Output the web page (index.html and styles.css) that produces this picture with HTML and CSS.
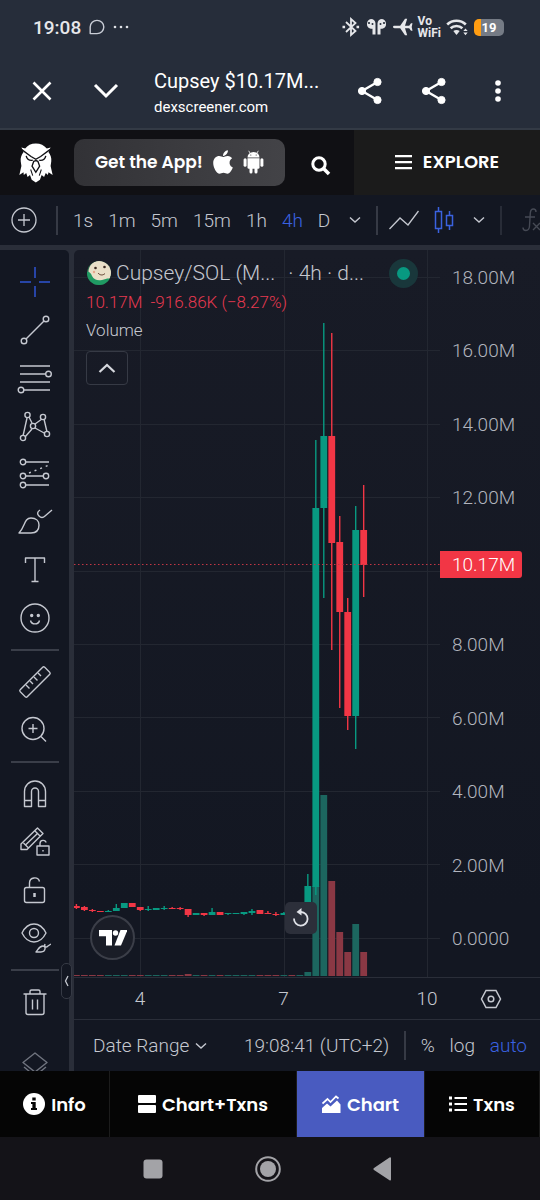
FILE: index.html
```html
<!DOCTYPE html>
<html lang="en">
<head>
  <meta charset="UTF-8">
  <title>Cupsey $10.17M</title>
  <meta name="viewport" content="width=device-width, initial-scale=1.0">
  <link rel="stylesheet" href="styles.css">
</head>
<body>

  <div class="status-bar">
    <span class="clock">19:08</span>
    <svg width="16" height="16" viewBox="0 0 16 16" fill="none" stroke="#c9cdd6" stroke-width="1.4" stroke-linejoin="round"><path d="M1.2 14.6V8A6.8 6.6 0 1 1 8 14.6Z"/></svg>
    <svg class="more-dots" width="16" height="4" viewBox="0 0 16 4" fill="#dfe1e6"><circle cx="2" cy="2" r="1.3"/><circle cx="8" cy="2" r="1.3"/><circle cx="14" cy="2" r="1.3"/></svg>
    <div class="status-icons">
      <svg width="18" height="20" viewBox="0 0 18 20" fill="none" stroke="#e6e7ea" stroke-width="1.8"><path d="M4 5l9.500 9L9 18V2l4.500 4L4 15"/><path d="M.5 10h2.600M14.500 10h2.600" stroke-width="2.400"/></svg>
      <svg width="23" height="18" viewBox="0 0 23 18" fill="#e6e7ea"><path d="M6 1a5 5 0 0 0-1 9.500c1 .3 2 .3 2.500.2V16.500h3V5.500A4.500 4.500 0 0 0 6 1Z"/><path d="M17 1a5 5 0 0 1 1 9.500c-1 .3-2 .3-2.500.2V16.500h-3V5.500A4.500 4.500 0 0 1 17 1Z"/><g fill="#262d3a"><circle cx="4" cy="5" r="1.100"/><circle cx="7.500" cy="6" r="1"/><circle cx="19" cy="5" r="1.100"/><circle cx="15.500" cy="6" r="1"/></g></svg>
      <svg width="20" height="18" viewBox="0 0 20 18" fill="#e6e7ea"><path d="M0 9c0-.8.6-1.200 1.600-1.200h5.600L12 .8h2.200L12 7.800h4.200L18 5.300h1.500L18.700 9l.8 3.700H18l-1.800-2.500H12l2.200 7H12L7.200 10.200H1.600C.6 10.200 0 9.800 0 9Z"/></svg>
      <span class="vowifi">Vo<br>WiFi</span>
      <svg width="23" height="18" viewBox="0 0 23 18" fill="none" stroke="#e6e7ea" stroke-width="2.600"><path d="M1.200 6.500a13.500 13.500 0 0 1 18.600 0M4.600 10.300a8.600 8.600 0 0 1 11.800 0"/><path d="M10.500 17l-3.200-4c2-1.500 4.400-1.500 6.400 0Z" fill="#e6e7ea" stroke="none"/><path d="M17.300 13l2.200-2.600 2.200 2.600zM17.300 14.600l2.200 2.600 2.200-2.600z" fill="#e6e7ea" stroke="none"/></svg>
      <span class="battery">19</span>
    </div>
  </div>

  <div class="browser-bar">
    <button class="icon-btn" aria-label="Close"><svg width="20" height="20" viewBox="0 0 20 20" fill="none" stroke="#fff" stroke-width="2.600"><path d="M1.500 1.500l17 17M18.500 1.500l-17 17"/></svg></button>
    <button class="icon-btn" aria-label="Minimise"><svg width="26" height="16" viewBox="0 0 26 16" fill="none" stroke="#fff" stroke-width="3"><path d="M2 2l11 11L24 2"/></svg></button>
    <div class="page-info">
      <div class="page-title">Cupsey $10.17M...</div>
      <div class="page-host">dexscreener.com</div>
    </div>
    <button class="icon-btn" aria-label="Share"><svg width="26" height="28" viewBox="0 0 26 28" fill="#fff" stroke="#fff"><path d="M20.500 5L5 14l15.500 9" fill="none" stroke-width="2.400"/><circle cx="20.500" cy="5" r="3.600"/><circle cx="5" cy="14" r="3.600"/><circle cx="20.500" cy="23" r="3.600"/></svg></button>
    <button class="icon-btn" aria-label="Share page"><svg width="26" height="28" viewBox="0 0 26 28" fill="#fff" stroke="#fff"><path d="M20.500 5L5 14l15.500 9" fill="none" stroke-width="2.400"/><circle cx="20.500" cy="5" r="3.600"/><circle cx="5" cy="14" r="3.600"/><circle cx="20.500" cy="23" r="3.600"/></svg></button>
    <button class="icon-btn" aria-label="More"><svg width="8" height="24" viewBox="0 0 8 24" fill="#fff"><circle cx="4" cy="4" r="2.800"/><circle cx="4" cy="12" r="2.800"/><circle cx="4" cy="20" r="2.800"/></svg></button>
  </div>

  <header class="site-header">
    <a class="logo" href="#" aria-label="Home">
      <svg width="34" height="40" viewBox="-1 -1 99 116"><path fill="#fff" d="M48 0C34 0 24 5 17 15L6 12L12 26C6 34 3 42 4 52L6 66L0 92L12 84L13 92L20 86L24 98L31 92L36 106L48 114L60 106L65 92L72 98L77 86L83 92L85 84L97 92L91 66L93 52C94 42 91 34 85 26L91 12L80 15C72 5 62 0 48 0Z"/><g fill="none" stroke="#101014" stroke-width="4"><path d="M4 16L34 38L48 46L62 38L92 16"/><path d="M20 36C22 46 30 50 39 49M77 36C75 46 67 50 58 49"/><path d="M48 50L42 52L37 66L48 84L59 66L54 52Z"/><path d="M33 76L39 94M64 76L58 94" stroke-width="3"/></g></svg>
    </a>
    <button class="app-btn">
      Get the App!
      <svg width="20" height="24" viewBox="0 30 384 452" fill="#fff"><path d="M318.700 268.700c-.2-36.700 16.400-64.400 50-84.800-18.800-26.900-47.200-41.700-84.700-44.600-35.500-2.800-74.300 20.700-88.500 20.700-15 0-49.400-19.700-76.400-19.700C63.300 141.200 4 184.800 4 273.500q0 39.300 14.400 81.200c12.800 36.700 59 126.700 107.200 125.200 25.200-.6 43-17.900 75.800-17.900 31.800 0 48.300 17.900 76.400 17.900 48.600-.7 90.400-82.500 102.600-119.300-65.200-30.700-61.700-90-61.700-91.900zm-56.600-164.200c27.300-32.400 24.800-61.900 24-72.500-24.100 1.400-52 16.400-67.900 34.900-17.500 19.800-27.800 44.300-25.600 71.900 26.100 2 49.900-11.400 69.500-34.300z"/></svg>
      <svg width="21" height="24" viewBox="0 0 21 24" fill="#fff"><path d="M4.500 7.500a6 5.500 0 0 1 12 0Z"/><path d="M7 3L5.700.8M14 3L15.300.8" stroke="#fff" stroke-width=".8"/><path d="M4.500 8.300h12v9.200a1.300 1.300 0 0 1-1.300 1.300H5.800a1.300 1.300 0 0 1-1.300-1.300Z"/><rect x=".6" y="8.300" width="3" height="8.400" rx="1.500"/><rect x="17.400" y="8.300" width="3" height="8.400" rx="1.500"/><rect x="6.500" y="16" width="3" height="7.500" rx="1.500"/><rect x="11.500" y="16" width="3" height="7.500" rx="1.500"/><circle cx="7.800" cy="5" r=".6" fill="#3c3c3f"/><circle cx="13.200" cy="5" r=".6" fill="#3c3c3f"/></svg>
    </button>
    <button class="search-btn" aria-label="Search"><svg width="20" height="20" viewBox="0 0 20 20" fill="none" stroke="#fff"><circle cx="8" cy="8" r="6.200" stroke-width="3"/><path d="M12.500 12.500l5.500 5.500" stroke-width="3.600"/></svg></button>
    <button class="explore-btn">
      <svg width="17" height="16" viewBox="0 0 17 16" fill="#fff"><path d="M0 1h17v2.200H0zM0 7h17v2.200H0zM0 13h17v2.200H0z"/></svg>
      EXPLORE
    </button>
  </header>

  <div class="chart-toolbar">
    <button aria-label="Compare"><svg width="26" height="26" viewBox="0 0 26 26" fill="none" stroke="#c5c8d0" stroke-width="1.300"><circle cx="13" cy="13" r="12"/><path d="M13 7v12M7 13h12"/></svg></button>
    <span class="v-sep first"></span>
    <button>1s</button>
    <button>1m</button>
    <button>5m</button>
    <button>15m</button>
    <button>1h</button>
    <button class="selected">4h</button>
    <button>D</button>
    <button class="menu-btn" aria-label="Intervals"><svg width="12" height="8" viewBox="0 0 12 8" fill="none" stroke="#c5c8d0" stroke-width="1.400"><path d="M1 1.500l5 4.500 5-4.500"/></svg></button>
    <span class="v-sep"></span>
    <button class="line-btn" aria-label="Line"><svg width="30" height="20" viewBox="0 0 30 20" fill="none" stroke="#c5c8d0" stroke-width="1.300"><path d="M.5 19L11 8l8 7L29.500 1"/></svg></button>
    <button aria-label="Candles"><svg width="20" height="28" viewBox="0 0 20 28" fill="none" stroke="#3a62e0" stroke-width="1.500"><path d="M1.500 5.500h6v17h-6zM4.500 1v4.500M4.500 22.500V27M12.500 9.500h6v10h-6zM15.500 5v4.500M15.500 19.500V24"/></svg></button>
    <button class="menu-btn" aria-label="Chart type"><svg width="12" height="8" viewBox="0 0 12 8" fill="none" stroke="#c5c8d0" stroke-width="1.400"><path d="M1 1.500l5 4.500 5-4.500"/></svg></button>
    <span class="v-sep faint"></span>
    <button class="menu-btn" aria-label="Indicators"><svg width="20" height="26" viewBox="0 0 20 26" fill="none" stroke="#464a55" stroke-width="1.400"><path d="M15 5c0-2-1-3-2.600-3C10.500 2 9.500 3.500 9.300 6L8.500 19c-.2 3-1.500 4.500-3.600 4.500C3 23.500 2 22 2 20.500M4 10h10M12 16l7 7M19 16l-7 7"/></svg></button>
  </div>

  <main class="workspace">
    <nav class="tools">
      <button aria-label="Crosshair"><svg width="32" height="32" viewBox="0 0 32 32" fill="none" stroke="#2f55d4" stroke-width="1.500"><path d="M16 1v11M16 20v11M1 16h11M20 16h11"/></svg></button>
      <button aria-label="Trend line"><svg class="line-icon" width="32" height="32" viewBox="0 0 32 32"><path d="M7 25L25 7"/><circle cx="5" cy="27" r="2.800"/><circle cx="27" cy="5" r="2.800"/></svg></button>
      <button aria-label="Fib retracement"><svg class="line-icon" width="36" height="32" viewBox="0 0 36 32"><path d="M3 4h30M3 12h26M3 20h30M6 28h27"/><circle cx="31.500" cy="12" r="2.800"/><circle cx="4" cy="28" r="2.800"/></svg></button>
      <button aria-label="Patterns"><svg class="line-icon" width="32" height="32" viewBox="0 0 32 32"><path d="M8 8L4 26M10 7l3 6M6 27l7-8M16 14l7-5M25 9l3 13M16 18l11 6"/><circle cx="8.500" cy="5" r="2.600"/><circle cx="24" cy="7" r="2.600"/><circle cx="14" cy="16" r="2.600"/><circle cx="4" cy="28" r="2.600"/><circle cx="28" cy="24" r="2.600"/></svg></button>
      <button aria-label="Prediction"><svg class="line-icon" width="32" height="32" viewBox="0 0 32 32"><path d="M7 4h23M7 18h17M7 27h23"/><path d="M10 15L30 7" stroke-dasharray="2 4"/><circle cx="4" cy="4" r="2.700"/><circle cx="4" cy="18" r="2.700"/><circle cx="27" cy="18" r="2.700"/><circle cx="4" cy="27" r="2.700"/></svg></button>
      <button aria-label="Brush"><svg class="line-icon" width="36" height="32" viewBox="0 0 36 32"><path d="M2 27C8 21 7 12 14 12C19 12 22 15 22 19C22 24 19 27 14 27Z"/><path d="M23 4c-3 2-3 4-1 6s4 2 6 0l7-6"/></svg></button>
      <button aria-label="Text"><svg class="line-icon" width="24" height="28" viewBox="0 0 24 28"><path d="M2.500 7V2h19v5M12 2v23M8.500 25.500h7"/></svg></button>
      <button aria-label="Emoji"><svg class="line-icon" width="32" height="32" viewBox="0 0 32 32"><circle cx="16" cy="16" r="14"/><path d="M11.500 18.500c1 4.500 8 4.500 9 0"/><circle cx="12.700" cy="13.500" r="1" class="dot"/><circle cx="19.300" cy="13.500" r="1" class="dot"/></svg></button>
      <span class="h-sep"></span>
      <button aria-label="Measure"><svg class="line-icon" width="34" height="34" viewBox="0 0 34 34"><rect x="-2" y="12" width="38" height="10" rx="1.500" transform="rotate(-45 17 17) translate(1.500 0) scale(.91 1)"/><path d="M8 20l3.500 3.500M12 16l3 3M16 12l3.500 3.500M20 8l3 3"/></svg></button>
      <button aria-label="Zoom in"><svg class="line-icon" width="32" height="32" viewBox="0 0 32 32"><circle cx="14" cy="14.500" r="11"/><path d="M22 22.500l5 5M14 10v9M9.500 14.500h9"/></svg></button>
      <span class="h-sep"></span>
      <button aria-label="Magnet"><svg class="line-icon" width="28" height="30" viewBox="0 0 28 30"><path d="M3.500 27.500V12.500a10.500 10.500 0 0 1 21 0v15H17.500V12.500a3.500 3.500 0 0 0-7 0v15ZM3.500 21.500h7M17.500 21.500h7"/></svg></button>
      <button aria-label="Keep drawing"><svg class="line-icon" width="32" height="32" viewBox="0 0 32 32"><path d="M2 18L18.500 2l5.500 5.500L8 23.500H2ZM16 5l5.500 5.500M4.500 17l4.500 4.500M7 18.500L19 7"/><path d="M18 20h12v9H18ZM21 20v-2.500c0-4 5.500-4 6-1M24 24v1.500"/></svg></button>
      <button aria-label="Lock"><svg class="line-icon" width="28" height="30" viewBox="0 0 28 30"><rect x="3.500" y="12.500" width="20" height="15" rx="2"/><path d="M8.500 12.500V8c0-6 8.500-7 10-1.500"/><path d="M13.500 18v4" stroke-width="2.500"/></svg></button>
      <button aria-label="Hide"><svg class="line-icon" width="32" height="34" viewBox="0 0 32 34"><path d="M3 12c6-12 18-12 24 0c-6 12-18 12-24 0Z"/><circle cx="15" cy="12" r="4.500"/><path d="M17 31c2-2 3-6 7-6c3 0 3 6-2 6ZM26 23c-1 3 1 4 3 2l3-2"/></svg></button>
      <span class="h-sep"></span>
      <button aria-label="Delete"><svg class="line-icon" width="28" height="30" viewBox="0 0 28 30"><path d="M2.500 7h23M5 7v18.500a2 2 0 0 0 2 2h14a2 2 0 0 0 2-2V7M9 7V4.500a1.500 1.500 0 0 1 1.500-1.500h7A1.500 1.500 0 0 1 19 4.500V7M11.500 12.500v10M16.500 12.500v10"/></svg></button>
      <button class="layers" aria-label="Object tree"><svg class="line-icon dim" width="28" height="30" viewBox="0 0 28 30"><path d="M14 4l12 9.500L14 23 2 13.500ZM3 18l11 9 11-9"/></svg></button>
    </nav>

    <section class="chart">
      <button class="collapse" aria-label="Hide toolbar"><svg width="5" height="12" viewBox="0 0 5 12" fill="none" stroke="#c5c8d0" stroke-width="1.300"><path d="M4 1L1.500 6 4 11"/></svg></button>

      <div class="chart-body">
        <div class="plot">
          <svg id="plot" class="plot-svg" viewBox="0 0 366 727" preserveAspectRatio="none"></svg>

          <div class="legend">
            <div class="legend-title">
              <svg width="26" height="26" viewBox="0 0 26 26"><defs><clipPath id="egg"><circle cx="13" cy="13" r="12"/></clipPath></defs><g clip-path="url(#egg)"><rect width="26" height="26" fill="#2b6a4c"/><ellipse cx="14" cy="12" rx="11.500" ry="11.500" fill="#e9dfc8"/><path d="M0 12c3-1 5 1 6 4c2 4 6 5 10 4s6-2 10-1v8H0Z" fill="#1f9a63"/></g><circle cx="9.500" cy="8" r="1.300" fill="#3a2a22"/><circle cx="18.500" cy="7" r="1.300" fill="#3a2a22"/><path d="M12 13c2 2.500 5 2.500 7 .5" fill="none" stroke="#5a3a2a"/><circle cx="8" cy="12" r="1.200" fill="#e6a58c"/></svg>
              <span class="symbol">Cupsey/SOL (M...</span>
              <span class="interval">· 4h · d...</span>
              <span class="live-dot"></span>
            </div>
            <div class="legend-price"><span>10.17M</span><span>-916.86K (−8.27%)</span></div>
            <div class="legend-volume">Volume</div>
            <button class="fold-btn" aria-label="Collapse legend"><svg width="18" height="12" viewBox="0 0 18 12" fill="none" stroke="#d6d8de" stroke-width="2.200"><path d="M1.500 10L9 3l7.500 7"/></svg></button>
          </div>

          <a class="tv-logo" href="#" aria-label="TradingView"><svg width="28" height="16" viewBox="0 0 28 16" fill="#fff"><path d="M0 0h13v15.500H7V6.200H0Z"/><circle cx="16.500" cy="3" r="2.700"/><path d="M21.500 0H28.500L22 15.500H15.500Z"/></svg></a>
          <button class="reset-btn" aria-label="Reset chart"><svg width="18" height="20" viewBox="0 0 18 20" fill="none" stroke="#e0e2e8" stroke-width="1.800"><path d="M2 10.500a6.800 6.800 0 1 0 7-6.500H6"/><path d="M9.500 0v7.500L4.500 4Z" fill="#e0e2e8" stroke="none"/></svg></button>
        </div>

        <div class="price-scale">
          <span>18.00M</span>
          <span>16.00M</span>
          <span>14.00M</span>
          <span>12.00M</span>
          <span></span>
          <span>8.00M</span>
          <span>6.00M</span>
          <span>4.00M</span>
          <span>2.00M</span>
          <span>0.0000</span>
          <div class="last-price">10.17M</div>
        </div>
      </div>

      <div class="time-scale">
        <div class="dates"><span>4</span><span>7</span><span>10</span></div>
        <button aria-label="Scale settings"><svg width="22" height="20" viewBox="0 0 22 20" fill="none" stroke="#c5c8d0" stroke-width="1.500"><path d="M6 1.500h10l4.500 8.500-4.500 8.500H6L1.500 10Z"/><circle cx="11" cy="10" r="2.800"/></svg></button>
      </div>

      <div class="range-bar">
        <button>Date Range <svg width="12" height="8" viewBox="0 0 12 8" fill="none" stroke="#c5c8d0" stroke-width="1.400"><path d="M1 1.500l5 4.500 5-4.500"/></svg></button>
        <button class="utc">19:08:41 (UTC+2)</button>
        <span class="v-sep"></span>
        <button>%</button>
        <button>log</button>
        <button class="selected">auto</button>
      </div>
    </section>
  </main>

  <nav class="tabs">
    <a href="#"><svg width="22" height="22" viewBox="0 0 22 22"><circle cx="11" cy="11" r="11" fill="#fff"/><path d="M9.300 4.500h3.400v3H9.300zM8 9h4.700v6H14v2H8v-2h1.400v-4H8z" fill="#050505"/></svg>Info</a>
    <a href="#"><svg width="18" height="18" viewBox="0 0 18 18" fill="#fff"><rect width="18" height="8" rx="1"/><rect y="10" width="18" height="8" rx="1"/></svg>Chart+Txns</a>
    <a href="#" class="active"><svg width="19" height="18" viewBox="0 0 19 18" fill="#fff"><path d="M0 13l5-4.500 3.500 3L15 5.500l3.500 4V18H0Z"/><path d="M.5 8.500L5.500 4l3 3L14 1.500l2.500 2" fill="none" stroke="#fff" stroke-width="1.700"/></svg>Chart</a>
    <a href="#"><svg width="18" height="16" viewBox="0 0 18 16" fill="#fff"><path d="M0 .5h3v3H0zM0 6.500h3v3H0zM0 12.500h3v3H0zM5.500 1H18v2H5.500zM5.500 7H18v2H5.500zM5.500 13H18v2H5.500z"/></svg>Txns</a>
  </nav>

  <div class="system-nav">
    <button aria-label="Recents"><svg width="26" height="26" viewBox="0 0 26 26" fill="#a3a3a7"><rect x="3.500" y="3.500" width="19" height="19" rx="3"/></svg></button>
    <button aria-label="Home"><svg width="26" height="26" viewBox="0 0 26 26" fill="#a3a3a7"><circle cx="13" cy="13" r="11.800" fill="none" stroke="#a3a3a7" stroke-width="2"/><circle cx="13" cy="13" r="8"/></svg></button>
    <button aria-label="Back"><svg width="26" height="26" viewBox="0 0 26 26" fill="#a3a3a7"><path d="M21 2v21.500a1 1 0 0 1-1.500.8L4 14a1.200 1.200 0 0 1 0-2L19.500 1.500A1 1 0 0 1 21 2Z"/></svg></button>
  </div>

  <script src="script.js"></script>
</body>
</html>
```
FILE: styles.css
```css
* {
  margin: 0;
  padding: 0;
  box-sizing: border-box;
}

body {
  height: 100vh;
  display: flex;
  flex-direction: column;
  overflow: hidden;
  font-family: Roboto, "Liberation Sans", sans-serif;
  font-weight: 300;
  color: #c5c8d0;
  background-color: #131722;
}

button {
  display: flex;
  align-items: center;
  justify-content: center;
  border: none;
  background: none;
  font: inherit;
  color: inherit;
  white-space: nowrap;
  cursor: pointer;
}

a {
  color: inherit;
  text-decoration: none;
}

svg {
  display: block;
  flex-shrink: 0;
}

/* Phone status bar */
.status-bar {
  height: 54px;
  padding: 0 36px 0 33px;
  display: flex;
  align-items: center;
  gap: 8px;
  background-color: #262d3a;
  color: #e6e7ea;
}

.clock {
  font-size: 19px;
  font-weight: 500;
}

.status-icons {
  margin-left: auto;
  display: flex;
  align-items: center;
  gap: 5px;
}

.vowifi {
  font-size: 12px;
  line-height: 12px;
  font-weight: 700;
}

.battery {
  width: 30px;
  height: 17px;
  border-radius: 5px;
  background: linear-gradient(to right, #ff9d12 7px, #757b85 7px);
  color: #fff;
  font-size: 13px;
  line-height: 17px;
  font-weight: 700;
  text-align: center;
}

/* In-app browser bar */
.browser-bar {
  height: 76px;
  padding: 0 24px 0 24px;
  display: flex;
  align-items: center;
  background-color: #262d3a;
  border-bottom: 2px solid #333a45;
  color: #fff;
}

.icon-btn {
  width: 36px;
  height: 48px;
}

.icon-btn + .icon-btn {
  margin-left: 28px;
}

.page-info {
  flex: 1;
  margin-left: 30px;
  padding-top: 4px;
  font-weight: 400;
}

.page-title {
  font-size: 20px;
  line-height: 28px;
}

.page-host {
  font-size: 15px;
  line-height: 24px;
}

/* Site header */
.site-header {
  height: 65px;
  display: flex;
  align-items: center;
  background-color: #101014;
  color: #fff;
  font-family: Poppins, Inter, sans-serif;
  font-weight: 600;
}

.logo {
  margin: 0 21px 0 19px;
}

.app-btn {
  height: 47px;
  flex: 213;
  gap: 10px;
  padding-bottom: 2px;
  border-radius: 10px;
  background: linear-gradient(to right, #323236, #434347);
  font-size: 17px;
}

.search-btn {
  flex: 66;
  height: 47px;
  padding: 6px 0 0 4px;
}

.explore-btn {
  flex: 188;
  height: 100%;
  gap: 11px;
  padding: 0 0 2px;
  background-color: #1b1b1b;
  font-size: 18px;
}

/* Interval toolbar */
.chart-toolbar {
  height: 50px;
  flex-shrink: 0;
  padding-left: 11px;
  display: flex;
  align-items: center;
  gap: 15px;
  overflow: hidden;
  font-size: 19px;
}

.v-sep {
  width: 2px;
  height: 29px;
  flex-shrink: 0;
  background-color: #363a45;
}

.v-sep.first {
  margin-left: 4px;
}

.v-sep.faint {
  background-color: #282c37;
}

.line-btn {
  margin-left: -4px;
}

.menu-btn {
  margin-left: 4px;
}

.selected {
  color: #3a62e0;
}

/* Workspace */
.workspace {
  flex: 1;
  min-height: 0;
  display: flex;
  gap: 5px;
  padding-top: 5px;
  background-color: #2a2e39;
}

.tools {
  width: 69px;
  flex-shrink: 0;
  padding-top: 8px;
  display: flex;
  flex-direction: column;
  align-items: center;
  overflow: hidden;
  border-radius: 0 5px 0 0;
  background-color: #131722;
}

.tools button {
  width: 48px;
  height: 48px;
  flex-shrink: 0;
}

.tools .layers {
  margin-top: 14px;
}

.line-icon {
  fill: none;
  stroke: #c5c8d0;
  stroke-width: 1.4;
  stroke-linejoin: round;
}

.line-icon circle {
  fill: #131722;
}

.line-icon .dot {
  fill: #c5c8d0;
}

.line-icon.dim {
  stroke: #70747f;
}

.h-sep {
  width: 48px;
  height: 2px;
  flex-shrink: 0;
  margin: 7px 0;
  background-color: #3a3e49;
}

.chart {
  position: relative;
  flex: 1;
  min-width: 0;
  display: flex;
  flex-direction: column;
  border-radius: 5px 0 0 0;
  background: linear-gradient(#181b26, #131722 80%);
}

.collapse {
  position: absolute;
  left: -13px;
  bottom: 72px;
  width: 11px;
  height: 36px;
  border: 1px solid #363a45;
  border-radius: 5px;
  background-color: #131722;
}

.chart-body {
  flex: 1;
  min-height: 0;
  display: flex;
}

.plot {
  position: relative;
  flex: 1;
  min-width: 0;
}

.plot-svg {
  width: 100%;
  height: 100%;
}

.legend {
  position: absolute;
  top: 8px;
  left: 12px;
}

.legend-title {
  height: 30px;
  display: flex;
  align-items: center;
  font-size: 21px;
  white-space: nowrap;
}

.symbol {
  margin-left: 4px;
}

.interval {
  margin: 0 25px 0 13px;
}

.live-dot {
  width: 29px;
  height: 29px;
  border: 8px solid #19373b;
  border-radius: 50%;
  background-color: #089981;
}

.legend-price {
  display: flex;
  gap: 8px;
  font-size: 17px;
  line-height: 28px;
  color: #e63950;
}

.legend-volume {
  font-size: 17px;
  line-height: 28px;
}

.fold-btn {
  width: 42px;
  height: 34px;
  margin-top: 7px;
  border: 1px solid #363a45;
  border-radius: 4px;
}

.tv-logo {
  position: absolute;
  left: 16px;
  bottom: 17px;
  width: 45px;
  height: 45px;
  display: flex;
  align-items: center;
  justify-content: center;
  border: 2px solid #3b3e48;
  border-radius: 50%;
  background-color: #1a1d27;
}

.reset-btn {
  position: absolute;
  left: 211px;
  bottom: 43px;
  width: 32px;
  height: 32px;
  border-radius: 5px;
  background-color: #2c2f3a;
}

.price-scale {
  position: relative;
  width: 100px;
  padding: 16px 0 26px 12px;
  display: flex;
  flex-direction: column;
  justify-content: space-between;
  font-size: 19px;
  line-height: 24px;
  color: #b2b5be;
}

.price-scale span {
  height: 24px;
}

.last-price {
  position: absolute;
  top: 301px;
  left: 0;
  width: 82px;
  padding-left: 12px;
  line-height: 27px;
  border-radius: 0 3px 3px 0;
  background-color: #f23645;
  color: #fff;
}

.time-scale {
  height: 42px;
  padding: 0 38px 0 46px;
  display: flex;
  align-items: center;
  gap: 33px;
  border-top: 1px solid #2a2e39;
  font-size: 19px;
}

.dates {
  flex: 1;
  display: flex;
  justify-content: space-between;
}

.dates span {
  width: 40px;
  text-align: center;
}

.range-bar {
  height: 52px;
  padding: 0 13px 0 19px;
  display: flex;
  align-items: center;
  justify-content: space-between;
  border-top: 1px solid #2a2e39;
  font-size: 19px;
}

.range-bar button {
  gap: 6px;
}

.range-bar .utc {
  margin-left: 22px;
}

/* Page tabs */
.tabs {
  height: 66px;
  display: grid;
  grid-template-columns: 110fr 187fr 128fr 115fr;
  background-color: #050505;
  color: #fff;
  font-family: Poppins, Inter, sans-serif;
  font-size: 18px;
  font-weight: 600;
}

.tabs a {
  display: flex;
  align-items: center;
  justify-content: center;
  gap: 6px;
  white-space: nowrap;
  border-right: 1px solid #1c1c1c;
}

.tabs .active {
  background-color: #495bc0;
}

/* Android navigation */
.system-nav {
  height: 63px;
  padding-right: 4px;
  display: flex;
  align-items: center;
  justify-content: center;
  gap: 89px;
  background-color: #141318;
}
```
FILE: script.js
```js
const SVG_NS = "http://www.w3.org/2000/svg";
const plot = document.getElementById("plot");

const UP = "#089981";
const DOWN = "#f23645";
const VOL_UP = "#1c665f";
const VOL_DOWN = "#8a3844";
const STEP = 7.98;
const BOTTOM = 726;

// [direction, high, body top, body bottom, low, volume height]
const candles = [
  ["d", 654, 656, 658, 659, 1],
  ["d", 656, 657, 660, 661, 1],
  ["d", 659, 660, 661, 662, 1],
  ["d", 661, 661, 662, 662, 1],
  ["u", 660, 661, 662, 662, 1],
  ["u", 654, 658, 661, 661, 1],
  ["u", 653, 653, 658, 658, 1],
  ["d", 653, 653, 657, 657, 1],
  ["d", 657, 657, 660, 661, 1],
  ["u", 656, 659, 660, 661, 1],
  ["u", 658, 658, 660, 660, 1],
  ["u", 656, 658, 659, 660, 1],
  ["d", 657, 658, 659, 659, 1],
  ["d", 657, 658, 659, 660, 1],
  ["d", 659, 659, 665, 667, 2],
  ["u", 663, 663, 665, 665, 1],
  ["d", 663, 663, 665, 666, 1],
  ["u", 658, 662, 665, 665, 1],
  ["d", 662, 662, 665, 665, 1],
  ["u", 663, 663, 664, 665, 1],
  ["u", 663, 663, 664, 664, 1],
  ["u", 662, 662, 664, 665, 1],
  ["u", 659, 661, 663, 665, 1],
  ["d", 660, 660, 664, 664, 1],
  ["d", 661, 663, 664, 664, 1],
  ["d", 662, 664, 665, 666, 1],
  ["u", 662, 663, 665, 665, 1],
  ["d", 662, 663, 665, 666, 1],
  ["u", 658, 660, 664, 665, 1],
  ["u", 624, 636, 664, 664, 4],
  ["u", 190, 258, 637, 645, 90],
  ["u", 73, 186, 258, 348, 181],
  ["d", 83, 186, 293, 400, 95],
  ["d", 266, 292, 362, 458, 44],
  ["d", 348, 362, 466, 480, 24],
  ["u", 256, 280, 466, 499, 52],
  ["d", 235, 280, 315, 347, 24]
];

function rect(x, y, width, height, fill) {
  const el = document.createElementNS(SVG_NS, "rect");
  el.setAttribute("x", x);
  el.setAttribute("y", y);
  el.setAttribute("width", width);
  el.setAttribute("height", height);
  el.setAttribute("fill", fill);
  plot.appendChild(el);
}

// Grid
for (let i = 0; i < 10; i++) {
  rect(0, Math.round(27 + i * 73.4), 366, 1, "#232731");
}
[66, 210, 353].forEach(x => rect(x, 0, 1, 727, "#232731"));

// Volume
candles.forEach((c, i) => {
  rect(i * STEP - 1, BOTTOM - c[5], 6.8, c[5], c[0] === "u" ? VOL_UP : VOL_DOWN);
});

// Candles
candles.forEach((c, i) => {
  const [dir, high, top, bottom, low] = c;
  const color = dir === "u" ? UP : DOWN;
  const mid = i * STEP + 2.4;
  rect(mid - 0.7, high, 1.4, low - high, color);
  rect(mid - 3.4, top, 6.8, bottom - top, color);
});

// Last price
const line = document.createElementNS(SVG_NS, "path");
line.setAttribute("d", "M0 314.5H366");
line.setAttribute("stroke", "#c23645");
line.setAttribute("stroke-dasharray", "1.5 2.5");
plot.appendChild(line);
```
